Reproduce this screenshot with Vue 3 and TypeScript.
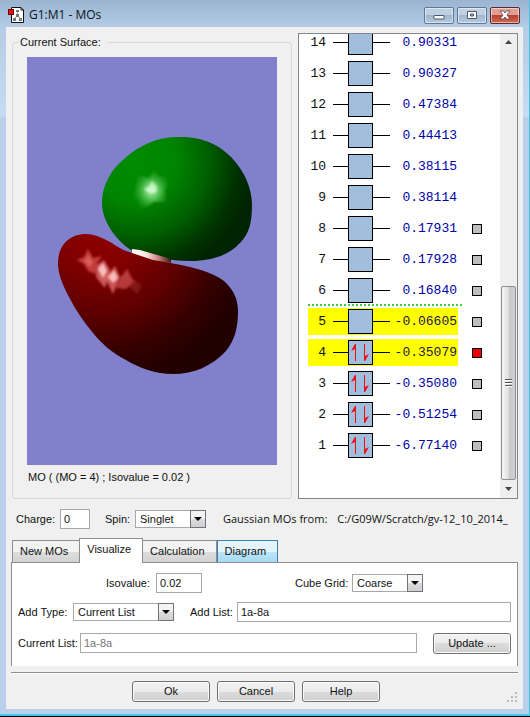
<script setup lang="ts">
import { ref } from 'vue'

interface Orbital {
  id: number
  energy: string
  occupied?: boolean
  frontier?: boolean
  marker?: 'idle' | 'active'
}

const orbitals: Orbital[] = [
  { id: 14, energy: '0.90331' },
  { id: 13, energy: '0.90327' },
  { id: 12, energy: '0.47384' },
  { id: 11, energy: '0.44413' },
  { id: 10, energy: '0.38115' },
  { id: 9, energy: '0.38114' },
  { id: 8, energy: '0.17931', marker: 'idle' },
  { id: 7, energy: '0.17928', marker: 'idle' },
  { id: 6, energy: '0.16840', marker: 'idle' },
  { id: 5, energy: '-0.06605', frontier: true, marker: 'idle' },
  { id: 4, energy: '-0.35079', occupied: true, frontier: true, marker: 'active' },
  { id: 3, energy: '-0.35080', occupied: true, marker: 'idle' },
  { id: 2, energy: '-0.51254', occupied: true, marker: 'idle' },
  { id: 1, energy: '-6.77140', occupied: true, marker: 'idle' },
]

const tabs = ['New MOs', 'Visualize', 'Calculation', 'Diagram']
const activeTab = ref('Visualize')

const charge = ref('0')
const spin = ref('Singlet')
const isovalue = ref('0.02')
const cubeGrid = ref('Coarse')
const addType = ref('Current List')
const addList = ref('1a-8a')
const currentList = ref('1a-8a')
</script>

<template>
  <div class="window">
    <header class="titlebar">
      <svg class="app-icon" width="16" height="16" viewBox="0 0 16 16">
        <path d="M3.5 .5H13L15.500 3V15.500H3.500Z" fill="#fff" stroke="#111" />
        <path d="M13 .5V3H15.500" fill="none" stroke="#111" />
        <path d="M9.500 4V8L6.500 12M9.500 8L12.500 12" fill="none" stroke="#999" />
        <path d="M8 3h3v2H8zM8 7h3v3H8zM5 11h3v3H5zM11 11h3v3h-3z" fill="#777" />
        <rect x=".5" y="2.500" width="5" height="5" fill="#e01010" stroke="#7a0000" />
      </svg>
      <h1 class="title">G1:M1 - MOs</h1>
      <div class="window-buttons">
        <button type="button" class="wbtn" aria-label="Minimize">
          <svg width="12" height="12" viewBox="0 0 12 12"><rect x="1" y="6.500" width="10" height="3.500" rx=".5" fill="#fff" stroke="#4c5666" /></svg>
        </button>
        <button type="button" class="wbtn" aria-label="Maximize">
          <svg width="12" height="12" viewBox="0 0 12 12"><path d="M1.500 2.500h9v7h-9zM4.500 5v2h3v-2z" fill="#fff" fill-rule="evenodd" stroke="#4c5666" /></svg>
        </button>
        <button type="button" class="wbtn close" aria-label="Close">
          <svg width="12" height="12" viewBox="0 0 12 12"><path d="M1 2h3.500L6 4l1.500-2H11L8 6l3 4H7.500L6 8l-1.500 2H1l3-4z" fill="#fff" stroke="#5a4050" stroke-width=".8" /></svg>
        </button>
      </div>
    </header>

    <main class="client">
      <section class="upper">
        <fieldset class="surface">
          <legend>Current Surface:</legend>
          <svg class="viewer" viewBox="0 0 250 408" role="img" aria-label="Orbital surface">
            <defs>
              <radialGradient id="green" gradientUnits="userSpaceOnUse" cx="108" cy="105" r="118">
                <stop offset="0" stop-color="#008c00" />
                <stop offset=".35" stop-color="#008400" />
                <stop offset=".62" stop-color="#006000" />
                <stop offset=".86" stop-color="#003200" />
                <stop offset="1" stop-color="#002400" />
              </radialGradient>
              <radialGradient id="red" gradientUnits="userSpaceOnUse" cx="74" cy="172" r="150">
                <stop offset="0" stop-color="#900000" />
                <stop offset=".28" stop-color="#800000" />
                <stop offset=".55" stop-color="#600000" />
                <stop offset=".8" stop-color="#380000" />
                <stop offset="1" stop-color="#220000" />
              </radialGradient>
              <linearGradient id="tube" x1="0" x2="1">
                <stop offset="0" stop-color="#fff" />
                <stop offset=".35" stop-color="#fbe6e2" />
                <stop offset=".65" stop-color="#d08a86" />
                <stop offset="1" stop-color="#3a1a10" />
              </linearGradient>
              <radialGradient id="glow">
                <stop offset="0" stop-color="#b4f8b4" />
                <stop offset=".4" stop-color="#62cc62" stop-opacity=".85" />
                <stop offset="1" stop-color="#20a020" stop-opacity="0" />
              </radialGradient>
              <filter id="soft" x="-20%" y="-20%" width="140%" height="140%"><feGaussianBlur stdDeviation="1.3" /></filter>
            </defs>
            <rect width="250" height="408" fill="#8080cc" />
            <path fill="url(#green)" d="M151 80C176 79 194 89 205 101C218 115 225 132 225 148C225 166 222 177 213 186C202 198 185 204 163 204C140 203 122 201 107 195C90 185 75 165 75 146C75 128 85 112 96 103C112 88 130 80 151 80Z" />
            <path fill="url(#red)" d="M59 177C68 177 75 181 83 185C90 189 96 194 106 196C118 200 132 203 143 206C162 209 184 214 197 224C207 233 211 243 211 254C211 270 208 283 199 294C185 309 167 317 146 317C129 317 112 311 99 303C85 296 74 286 66 276C56 264 48 252 42 240C36 229 31 217 31 206C31 189 42 177 59 177Z" />
            <path fill="url(#tube)" d="M105 192L113 193L144 202V206L126 203L105 196Z" />
            <g filter="url(#soft)">
              <path fill="url(#glow)" d="M127 111L132 119L145 119L138 133L139 145L127 145L110 156L111 142L104 146L108 131L110 117L122 121Z" />
              <path fill="#e0ffe0" opacity=".7" d="M125 124L130 130L129 136L122 136L117 132L122 129Z" />
              <path fill="#d85050" opacity=".75" d="M61 192L66 201L75 199L70 206L69 217L61 214L57 207L50 203L57 200Z" />
              <path fill="#f08080" opacity=".5" d="M62 198L66 206L62 210L57 204Z" />
              <path fill="#e07070" opacity=".8" d="M77 203L83 213L78 231L69 220L70 208Z" />
              <path fill="#ffd0cc" opacity=".85" d="M76 206L80 214L76 221L71 212Z" />
              <path fill="#de6868" opacity=".8" d="M88 209L93 220L86 237L78 221Z" />
              <path fill="#ffcccc" opacity=".85" d="M87 213L91 221L86 226L81 220Z" />
              <path fill="#c84848" opacity=".8" d="M100 212L107 225L99 232L89 231L93 221Z" />
              <path fill="#983030" opacity=".45" d="M107 222L115 229L110 237L103 230Z" />
            </g>
          </svg>
          <p class="caption">MO ( (MO = 4) ; Isovalue = 0.02 )</p>
        </fieldset>

        <div class="diagram">
          <ul class="levels">
            <template v-for="orbital in orbitals" :key="orbital.id">
              <li v-if="orbital.id === 5" class="fermi" aria-hidden="true"></li>
              <li class="level">
                <span class="state" :class="{ frontier: orbital.frontier }">
                  <span class="index">{{ orbital.id }}</span>
                  <svg class="box" width="57" height="25" viewBox="0 0 57 25">
                    <path d="M0 12.500H57" stroke="#000" />
                    <rect x="15.500" y=".5" width="24" height="24" fill="#a2bedd" stroke="#000" />
                    <g v-if="orbital.occupied" fill="#ed0c18">
                      <path d="M22 4H23V21H22ZM22 4V9L18 11Z" />
                      <path d="M31 4H32V21H31ZM32 21V16L36 14Z" />
                    </g>
                  </svg>
                  <span class="energy">{{ orbital.energy }}</span>
                </span>
                <button
                  v-if="orbital.marker"
                  type="button"
                  class="marker"
                  :class="orbital.marker"
                  :aria-label="'Show surface of orbital ' + orbital.id"
                ></button>
              </li>
            </template>
          </ul>
          <div class="scrollbar">
            <svg width="15" height="16" viewBox="0 0 15 16"><path d="M4 10L7.500 6L11 10Z" fill="#444" /></svg>
            <div class="track"></div>
            <div class="thumb"><i></i><i></i><i></i></div>
            <svg width="15" height="18" viewBox="0 0 15 18"><path d="M4 7L7.500 11L11 7Z" fill="#444" /></svg>
          </div>
        </div>
      </section>

      <section class="state-row">
        <label for="charge">Charge:</label>
        <input id="charge" v-model="charge" class="field charge" type="text" />
        <label for="spin" class="spin-label">Spin:</label>
        <span class="combo short">
          <select id="spin" v-model="spin"><option>Singlet</option><option>Triplet</option></select>
          <span class="arrow"></span>
        </span>
        <p class="source"><span>Gaussian MOs from:</span><span>C:/G09W/Scratch/gv-12_10_2014_</span></p>
      </section>

      <nav class="tabs" role="tablist">
        <button
          v-for="tab in tabs"
          :key="tab"
          type="button"
          role="tab"
          class="tab"
          :class="{ active: tab === activeTab, hot: tab === 'Diagram' }"
          :aria-selected="tab === activeTab"
          @click="activeTab = tab"
        >{{ tab }}</button>
      </nav>

      <section class="panel">
        <div class="row first">
          <label for="iso">Isovalue:</label>
          <input id="iso" v-model="isovalue" class="field iso" type="text" />
          <label for="grid" class="push">Cube Grid:</label>
          <span class="combo short">
            <select id="grid" v-model="cubeGrid"><option>Coarse</option><option>Medium</option><option>Fine</option></select>
            <span class="arrow"></span>
          </span>
        </div>
        <div class="row">
          <label for="type" class="lead-type">Add Type:</label>
          <span class="combo wide">
            <select id="type" v-model="addType"><option>Current List</option><option>HOMO</option><option>LUMO</option></select>
            <span class="arrow"></span>
          </span>
          <label for="list" class="add-label">Add List:</label>
          <input id="list" v-model="addList" class="field grow" type="text" />
        </div>
        <div class="row last">
          <label for="current" class="lead-current">Current List:</label>
          <input id="current" v-model="currentList" class="field grow" type="text" disabled />
          <button type="button" class="push-button update">Update ...</button>
        </div>
      </section>

      <footer class="actions">
        <button type="button" class="push-button">Ok</button>
        <button type="button" class="push-button">Cancel</button>
        <button type="button" class="push-button">Help</button>
        <svg class="grip" width="10" height="10" viewBox="0 0 10 10">
          <path d="M8 0h2v2H8zM4 4h2v2H4zM8 4h2v2H8zM0 8h2v2H0zM4 8h2v2H4zM8 8h2v2H8z" fill="#bcbcbc" />
        </svg>
      </footer>
    </main>
  </div>
</template>

<style>
body {
  background: #000;
}
</style>

<style scoped>
* {
  box-sizing: border-box;
}

.window {
  margin-bottom: 1px;
  padding: 0 6px 5px;
  border-right: 1px solid #3cc4ec;
  border-bottom: 2px solid #45c8ee;
  background: linear-gradient(#9ab4d1 0, #b4cce5 27px, #c6dcf2 116px, #b9d0ea 118px);
  font-family: "Liberation Sans", Arial, sans-serif;
  font-size: 11px;
  line-height: 14px;
  color: #111;
}

.titlebar {
  display: flex;
  align-items: center;
  height: 27px;
  padding: 3px 3px 0 2px;
}

.title {
  flex: 1;
  margin: 0 0 0 5px;
  font: 12px/16px "Open Sans", "Noto Sans", sans-serif;
  color: #0c1420;
}

.window-buttons {
  display: flex;
  gap: 3px;
}

.wbtn {
  display: grid;
  place-items: center;
  width: 30px;
  height: 17px;
  padding: 0;
  border: 1px solid #62788f;
  border-radius: 2px;
  box-shadow: inset 0 0 0 1px rgba(255, 255, 255, 0.5);
  background: linear-gradient(#bfd0e2 50%, #9fb6cf 50%, #b4cae0);
}

.wbtn.close {
  border-color: #5e2630;
  background: linear-gradient(#dda092 45%, #bd4030 50%, #cf6a4c);
}

.client {
  padding: 6px 5px 7px 6px;
  background: #f0f0f0;
}

.upper {
  display: flex;
  gap: 6px;
}

.surface {
  flex: 1;
  min-width: 0;
  margin: 2px 0 0;
  padding: 8px 14px 14px;
  border: 1px solid #d9d9d9;
  border-radius: 3px;
}

.surface legend {
  margin-left: -8px;
  padding: 0 6px 0 1px;
}

.viewer {
  display: block;
  width: 100%;
}

.caption {
  margin: 5px 0 0;
  padding-left: 1px;
}

.diagram {
  display: flex;
  width: 220px;
  border: 1px solid #828790;
  background: #fff;
}

.levels {
  display: flex;
  flex: 1;
  flex-direction: column;
  justify-content: flex-end;
  contain: size;
  overflow: hidden;
  margin: 0;
  padding: 0 0 37px 9px;
  list-style: none;
}

.level {
  display: flex;
  flex: none;
  align-items: center;
  gap: 14px;
  height: 31px;
}

.state {
  display: flex;
  align-items: center;
  width: 150px;
  height: 27px;
  padding-right: 1px;
  font: 13px/16px "Liberation Mono", monospace;
}

.index {
  width: 18px;
  margin-right: 7px;
  text-align: right;
}

.energy {
  flex: 1;
  text-align: right;
  color: #0000a8;
}

.frontier {
  background: #ff0;
}

.frontier .energy {
  color: #20204c;
}

.fermi {
  flex: none;
  width: 154px;
  height: 2px;
  margin-top: -2px;
  background: repeating-linear-gradient(90deg, #3ccc3c 0 2px, transparent 2px 4px);
}

.marker {
  width: 10px;
  height: 10px;
  padding: 0;
  border: 1px solid #000;
  background: #bebebe;
}

.marker.active {
  background: #f00000;
}

.scrollbar {
  display: flex;
  flex-direction: column;
  width: 17px;
  padding: 0 1px;
  background: #efefef;
}

.track {
  flex: 237;
}

.thumb {
  display: flex;
  flex: 193;
  flex-direction: column;
  align-items: center;
  justify-content: center;
  gap: 1px;
  border: 1px solid #8e8f8f;
  border-radius: 2px;
  background: linear-gradient(90deg, #f6f6f6, #e2e2e2 45%, #c8c8ca 60%, #d2d2d4);
}

.thumb i {
  width: 7px;
  height: 2px;
  border-top: 1px solid #555;
  background: #fff;
}

.state-row {
  display: flex;
  align-items: center;
  height: 20px;
  margin-top: 10px;
  padding: 0 6px 0 4px;
}

label {
  white-space: nowrap;
}

.state-row label {
  width: 44px;
}

.state-row .spin-label {
  width: 30px;
  margin-left: 15px;
}

.field,
.combo select {
  min-width: 0;
  height: 20px;
  margin: 0;
  padding: 0 3px;
  border: 1px solid #a5a8ad;
  border-radius: 0;
  background: #fff;
  font: inherit;
  color: #111;
}

.field:disabled {
  color: #777;
}

.charge {
  width: 30px;
}

.iso {
  width: 46px;
}

.grow {
  flex: 1;
}

.combo {
  display: grid;
  align-items: center;
}

.combo select {
  grid-area: 1 / 1;
  width: 100%;
  height: 18px;
  padding: 0 20px 0 4px;
  appearance: none;
}

.short {
  width: 71px;
}

.wide {
  width: 101px;
}

.arrow {
  display: grid;
  grid-area: 1 / 1;
  justify-self: end;
  place-items: center;
  width: 16px;
  height: 18px;
  border: 1px solid #70737a;
  background: linear-gradient(#f4f4f4 50%, #dcdcdc 50%, #d0d0d0);
  pointer-events: none;
}

.arrow::after {
  content: "";
  border: 4px solid transparent;
  border-top-color: #000;
  border-bottom: 0;
}

.source {
  display: flex;
  flex: 1;
  gap: 10px;
  min-width: 0;
  margin: 0 0 0 17px;
  white-space: nowrap;
  font: 11px/16px "Open Sans", "Noto Sans", sans-serif;
}

.tabs {
  display: flex;
  align-items: flex-end;
  margin-top: 9px;
}

.tab {
  height: 22px;
  margin: 0 0 0 -1px;
  padding: 0 11px 2px 7px;
  border: 1px solid #8c8e94;
  border-bottom: 0;
  background: linear-gradient(#f3f3f3 50%, #dedede 50%, #d2d2d2);
  font: inherit;
  color: #111;
}

.tab:first-child {
  margin-left: 0;
}

.tab.active {
  position: relative;
  height: 25px;
  margin-bottom: -1px;
  padding-bottom: 5px;
  background: #fff;
}

.tab.hot {
  margin-left: 0;
  border-color: #3c7fb1;
  background: linear-gradient(#e4f4fc 50%, #bce5fa 50%, #a6daf5);
}

.panel {
  display: flex;
  flex-direction: column;
  margin-left: -1px;
  padding: 10px 6px 13px;
  border: 1px solid #8c8e94;
  border-bottom: 0;
  background: #fff;
}

.row {
  display: flex;
  align-items: center;
  height: 20px;
  margin-bottom: 9px;
}

.row.last {
  margin: 2px 0 0;
}

.first {
  padding: 0 88px;
}

.first label {
  width: 50px;
}

.first .push {
  width: 57px;
  margin-left: auto;
}

.lead-type {
  width: 55px;
}

.add-label {
  width: 47px;
  margin-left: 16px;
}

.lead-current {
  width: 62px;
}

.push-button {
  width: 78px;
  height: 21px;
  padding: 0 0 1px;
  border: 1px solid #707070;
  border-radius: 3px;
  box-shadow: inset 0 0 0 1px #fafafa;
  background: linear-gradient(#f2f2f2, #ebebeb 50%, #dcdcdc 50%, #cfcfcf);
  font: inherit;
  color: #111;
}

.update {
  margin-left: 16px;
}

.actions {
  display: flex;
  gap: 7px;
  margin: 6px 0 0 -1px;
  padding: 8px 1px 0 121px;
  border-top: 1px solid #8c8e94;
  box-shadow: inset 0 1px #fff;
}

.grip {
  align-self: flex-end;
  margin-left: auto;
}
</style>
